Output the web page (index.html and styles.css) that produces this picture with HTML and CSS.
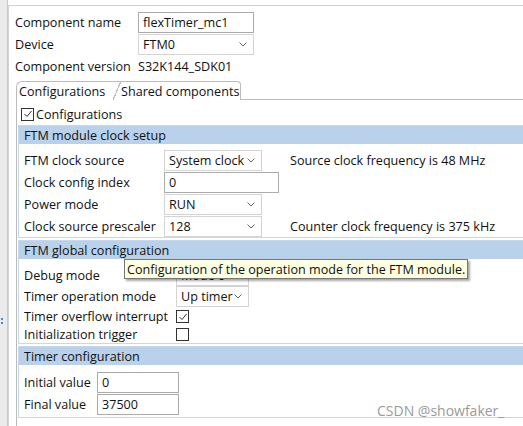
FILE: index.html
```html
<!DOCTYPE html>
<html>
<head>
<meta charset="utf-8">
<link rel="stylesheet" href="styles.css">
</head>
<body>
<div class="app">
  <div class="sidebar"><span class="sash"></span></div>
  <div class="main">
    <div class="props">
      <span class="lbl">Component name</span>
      <span class="input w115">flexTimer_mc1</span>
      <span class="lbl">Device</span>
      <span class="select w115">FTM0<svg class="arr" width="8" height="5" viewBox="0 0 8 5"><path d="M0.5 0.5 L4 4 L7.5 0.5" fill="none" stroke="#666" stroke-width="1"/></svg></span>
      <span class="lbl">Component version</span>
      <span class="val">S32K144_SDK01</span>
    </div>
    <div class="tabs">
      <span class="tab active">Configurations</span>
      <span class="tab second">Shared components</span>
    </div>
    <div class="panel">
      <div class="chkrow"><span class="chk on"><svg width="10" height="10" viewBox="0 0 10 10"><path d="M1.5 5 L4 7.5 L8.5 2" fill="none" stroke="#333" stroke-width="1"/></svg></span>Configurations</div>

      <div class="section first">
        <div class="hdr">FTM module clock setup</div>
        <div class="body grid3">
          <span class="lbl">FTM clock source</span>
          <span class="cell"><span class="select w97">System clock<svg class="arr" width="8" height="5" viewBox="0 0 8 5"><path d="M0.5 0.5 L4 4 L7.5 0.5" fill="none" stroke="#666" stroke-width="1"/></svg></span></span>
          <span class="note">Source clock frequency is 48 MHz</span>
          <span class="lbl">Clock config index</span>
          <span class="cell"><span class="input w114">0</span></span>
          <span></span>
          <span class="lbl">Power mode</span>
          <span class="cell"><span class="select w97">RUN<svg class="arr" width="8" height="5" viewBox="0 0 8 5"><path d="M0.5 0.5 L4 4 L7.5 0.5" fill="none" stroke="#666" stroke-width="1"/></svg></span></span>
          <span></span>
          <span class="lbl">Clock source prescaler</span>
          <span class="cell"><span class="select w97">128<svg class="arr" width="8" height="5" viewBox="0 0 8 5"><path d="M0.5 0.5 L4 4 L7.5 0.5" fill="none" stroke="#666" stroke-width="1"/></svg></span></span>
          <span class="note">Counter clock frequency is 375 kHz</span>
        </div>
      </div>

      <div class="section">
        <div class="hdr">FTM global configuration</div>
        <div class="body g2">
          <span class="lbl r22">Debug mode</span>
          <span class="select w72">Mode 0<svg class="arr" width="8" height="5" viewBox="0 0 8 5"><path d="M0.5 0.5 L4 4 L7.5 0.5" fill="none" stroke="#666" stroke-width="1"/></svg></span>
          <span class="lbl r21">Timer operation mode</span>
          <span class="select w72">Up timer<svg class="arr" width="8" height="5" viewBox="0 0 8 5"><path d="M0.5 0.5 L4 4 L7.5 0.5" fill="none" stroke="#666" stroke-width="1"/></svg></span>
          <span class="lbl r18">Timer overflow interrupt</span>
          <span class="chkcell r18"><span class="chk on"><svg width="10" height="10" viewBox="0 0 10 10"><path d="M1.5 5 L4 7.5 L8.5 2" fill="none" stroke="#333" stroke-width="1"/></svg></span></span>
          <span class="lbl r17">Initialization trigger</span>
          <span class="chkcell r17"><span class="chk"></span></span>
        </div>
        <div class="tooltip">Configuration of the operation mode for the FTM module.</div>
      </div>

      <div class="section">
        <div class="hdr">Timer configuration</div>
        <div class="body g3">
          <span class="lbl">Initial value</span>
          <span class="input w81">0</span>
          <span class="lbl">Final value</span>
          <span class="input w81">37500</span>
        </div>
      </div>
    </div>
  </div>
  <div class="watermark">CSDN @showfaker_</div>
</div>
</body>
</html>
```
FILE: styles.css
```css
html, body {
  margin: 0;
  padding: 0;
  background: #ffffff;
}
body {
  font-family: "Open Sans", "Noto Sans", sans-serif;
  font-size: 12.6px;
  color: #111111;
  width: 523px;
  height: 426px;
  overflow: hidden;
}
.app {
  display: flex;
  height: 426px;
  overflow: hidden;
  position: relative;
}
.sidebar {
  width: 7px;
  background: #ebebeb;
  border-right: 1px solid #c9c9c9;
  flex: none;
  position: relative;
}
.sash {
  position: absolute;
  left: 1px;
  top: 318px;
  height: 6px;
  border-left: 2px dotted #4a8ad6;
}
.main {
  flex: 1;
  margin-top: 5px;
  border-top: 1px solid #d3d3d3;
  border-left: 1px solid #d3d3d3;
  padding: 6px 0 0 6px;
  min-width: 0;
  display: flex;
  flex-direction: column;
}
.props {
  display: grid;
  grid-template-columns: 123px max-content;
  grid-auto-rows: 21px;
  row-gap: 1px;
  align-items: center;
}
.lbl, .val, .note {
  display: flex;
  align-items: center;
  white-space: nowrap;
  height: 21px;
}
.cell { display: flex; align-items: center; }
.input, .select {
  box-sizing: border-box;
  height: 21px;
  display: flex;
  align-items: center;
  padding-left: 4px;
  white-space: nowrap;
  background: #fff;
}
.input { border: 1px solid #ababab; }
.select {
  border: 1px solid #d4d4d4;
  position: relative;
  padding-right: 16px;
  overflow: hidden;
}
.arr {
  position: absolute;
  right: 6px;
  top: 7px;
}
.w115 { width: 116px; }
.w114 { width: 115px; }
.w97 { width: 98px; }
.w72 { width: 73px; }
.w81 { width: 82px; }
.tabs {
  display: flex;
  margin-top: 4px;
  margin-left: 1px;
  height: 18px;
  flex: none;
}
.tab {
  box-sizing: border-box;
  height: 19px;
  display: flex;
  align-items: center;
  white-space: nowrap;
  border: 1px solid #bcbcbc;
  border-bottom: none;
  background: #fff;
  position: relative;
  z-index: 1;
}
.tab.active {
  width: 97px;
  padding-left: 2px;
  border-right: none;
  border-radius: 6px 0 0 0;
}
.tab.second {
  border-left: none;
  border-radius: 0 4px 0 0;
  padding-left: 8px;
  width: 128px;
  background: #fff;
  z-index: 0;
}
.tab.second::before {
  content: "";
  position: absolute;
  left: 0;
  top: -1px;
  width: 8px;
  height: 19px;
  background: linear-gradient(to bottom right, transparent calc(50% - 0.6px), #bcbcbc calc(50% - 0.6px), #bcbcbc calc(50% + 0.6px), transparent calc(50% + 0.6px));
}
.panel {
  flex: 1;
  margin-left: 1px;
  border-left: 1px solid #bcbcbc;
  border-top: 1px solid #bcbcbc;
  padding: 6px 0 0 1px;
}
.chkrow {
  display: flex;
  align-items: center;
  height: 16px;
  padding-left: 3px;
  gap: 2px;
}
.chk {
  box-sizing: border-box;
  width: 13px;
  height: 13px;
  border: 1px solid #333;
  background: #fff;
  display: inline-flex;
  align-items: center;
  justify-content: center;
}
.section {
  border: 1px solid #c6d8ee;
  border-right: none;
  margin-top: 2px;
  position: relative;
}
.section.first { margin-top: 3px; }
.hdr {
  background: #b9d1ea;
  height: 18px;
  display: flex;
  align-items: center;
  padding-left: 5px;
}
.body {
  display: grid;
  row-gap: 1px;
  padding: 6px 0 0 5px;
  align-items: center;
}
.grid3 { grid-template-columns: 140px 126px max-content; }
.g2 {
  grid-template-columns: 152px max-content;
  padding-top: 5px;
  row-gap: 0;
  padding-bottom: 0;
}
.g2 .r22 { height: 22px; }
.g2 .r21 { height: 21px; }
.g2 .r18 { height: 19px; }
.g2 .r17 { height: 17px; }
.chkcell { display: flex; align-items: center; }
.g3 {
  grid-template-columns: 73px max-content;
  padding-top: 7px;
  padding-bottom: 2px;
}
.tooltip {
  position: absolute;
  left: 105px;
  top: 18px;
  background: #ffffe1;
  border: 1px solid #767676;
  box-shadow: 2px 2px 2px rgba(0, 0, 0, 0.35);
  padding: 0 2px;
  height: 18px;
  display: flex;
  align-items: center;
  white-space: nowrap;
  z-index: 5;
}
.watermark {
  position: absolute;
  left: 377px;
  top: 401px;
  color: #9a9a9a;
  font-size: 14px;
  white-space: nowrap;
}
```
